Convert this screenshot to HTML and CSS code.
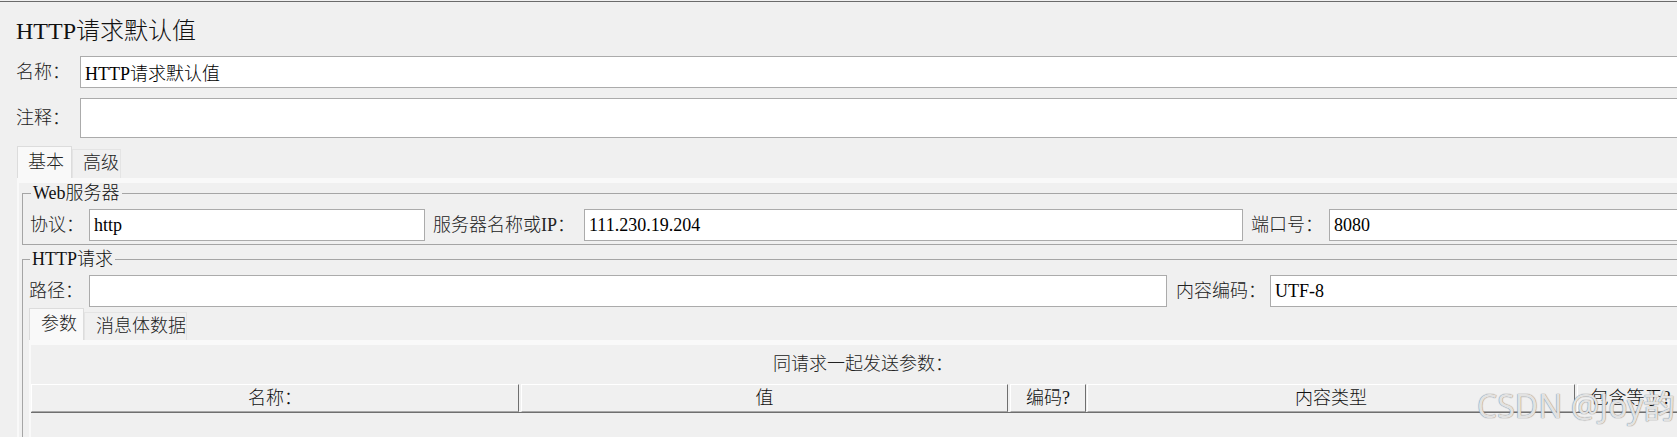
FILE: index.html
```html
<!DOCTYPE html>
<html lang="zh-CN">
<head>
<meta charset="utf-8">
<title>HTTP请求默认值</title>
<link rel="stylesheet" href="styles.css">
</head>
<body>
<div class="page">
  <div class="title">HTTP请求默认值</div>

  <div class="form-row name-row">
    <label class="main-label">名称：</label>
    <input class="text-input grow" type="text" value="HTTP请求默认值">
  </div>
  <div class="form-row comment-row">
    <label class="main-label">注释：</label>
    <input class="text-input grow comment-input" type="text" value="">
  </div>

  <div class="tabs outer-tabs">
    <div class="tab active tab-basic">基本</div>
    <div class="tab tab-adv">高级</div>
  </div>
  <div class="tabpanel outer-panel">
    <fieldset class="group web-group">
      <legend>Web服务器</legend>
      <div class="form-row">
        <label class="lbl lbl-proto">协议：</label>
        <input class="text-input in-proto" type="text" value="http">
        <label class="lbl lbl-server">服务器名称或IP：</label>
        <input class="text-input in-server" type="text" value="111.230.19.204">
        <label class="lbl lbl-port">端口号：</label>
        <input class="text-input grow" type="text" value="8080">
      </div>
    </fieldset>

    <fieldset class="group http-group">
      <legend>HTTP请求</legend>
      <div class="form-row">
        <label class="lbl lbl-path">路径：</label>
        <input class="text-input in-path" type="text" value="">
        <label class="lbl lbl-enc">内容编码：</label>
        <input class="text-input grow" type="text" value="UTF-8">
      </div>
      <div class="tabs inner-tabs">
        <div class="tab active tab-params">参数</div>
        <div class="tab tab-body">消息体数据</div>
      </div>
      <div class="tabpanel inner-panel">
        <div class="caption">同请求一起发送参数：</div>
        <div class="thead">
          <div class="th c1">名称：</div>
          <div class="th c2">值</div>
          <div class="th c3">编码?</div>
          <div class="th c4">内容类型</div>
          <div class="th c5">包含等于?</div>
        </div>
        <div class="tbody"></div>
      </div>
    </fieldset>
  </div>

  <div class="watermark">CSDN @Joy韵</div>
</div>
</body>
</html>
```

FILE: styles.css
```css
html, body {
  margin: 0;
  background: #f0f0f0;
}
body {
  padding-top: 1px;
  overflow: hidden;
  font-family: "Liberation Serif", "Noto Sans CJK SC", serif;
  font-size: 18px;
  font-weight: 300;
  color: #000;
}
.page {
  position: relative;
  box-sizing: border-box;
  width: 1760px;
  height: 436px;
  overflow: hidden;
  border-top: 1px solid #6b6b6b;
  padding-left: 16px;
}
.title {
  margin-top: 15px;
  font-size: 24px;
  line-height: 28px;
  color: #111;
}

.form-row {
  display: flex;
  align-items: center;
}
.name-row { margin-top: 11px; }
.comment-row { margin-top: 10px; }
.main-label {
  flex: none;
  width: 64px;
  line-height: 20px;
  color: #222;
}
.lbl {
  flex: none;
  line-height: 20px;
  color: #222;
}
.text-input {
  box-sizing: border-box;
  flex: none;
  height: 32px;
  margin: 0;
  padding: 0 4px;
  border: 1px solid #ababab;
  background: #fff;
  font: inherit;
  color: #000;
  outline: none;
}
.grow { flex: 1 1 auto; min-width: 0; }
.comment-input { height: 40px; }

/* tabs */
.tabs {
  display: flex;
  align-items: flex-end;
  height: 32px;
}
.outer-tabs { margin: 8px 0 0 1px; }
.inner-tabs { margin-top: 1px; }
.tab {
  box-sizing: border-box;
  height: 29px;
  padding-left: 10px;
  border: 1px solid #e4e4e4;
  border-bottom: none;
  background: #f0f0f0;
  line-height: 27px;
  color: #222;
}
.tab.active {
  height: 32px;
  background: #f9f9f9;
  border-color: #dcdcdc;
  line-height: 31px;
}
.tab-basic { width: 55px; }
.tab-adv { width: 49px; }
.tab-params { width: 55px; padding-left: 11px; }
.tab-body { width: 103px; padding-left: 11px; height: 28px; line-height: 26px; }

.tabpanel {
  border-top: 5px solid #f9f9f9;
  border-left: 2px solid #f9f9f9;
}
.outer-panel { margin-left: 1px; }

/* groups */
.group {
  min-width: 0;
  margin: 0 0 0 3px;
  padding: 6px 8px 3px 7px;
  border: 1px solid #a5a5a5;
}
.group legend {
  margin-left: 1px;
  padding: 0 2px;
  font-size: 18px;
  line-height: 20px;
  color: #111;
}
.http-group {
  margin-top: 4px;
  padding-left: 6px;
}

.lbl-proto { width: 59px; }
.in-proto { width: 336px; }
.lbl-server { margin-left: 8px; width: 151px; }
.in-server { width: 659px; }
.lbl-port { margin-left: 8px; width: 78px; }

.lbl-path { width: 60px; }
.in-path { width: 1078px; }
.lbl-enc { margin-left: 9px; width: 94px; }

/* params panel */
.caption {
  width: 1664px;
  height: 39px;
  line-height: 39px;
  text-align: center;
  color: #222;
}
.thead {
  display: flex;
  border-bottom: 1px solid #6f6f6f;
}
.th {
  box-sizing: border-box;
  flex: none;
  height: 28px;
  margin-right: 2px;
  border-top: 1px solid #fff;
  border-left: 1px solid #fff;
  border-right: 1px solid #6f6f6f;
  border-bottom: 1px solid #a8a8a8;
  text-align: center;
  line-height: 26px;
  color: #111;
}
.c1 { width: 488px; }
.c2 { width: 487px; }
.c3 { width: 76px; margin-right: 1px; }
.c4 { width: 488px; }
.c5 { width: 107px; }
.tbody { height: 24px; }

.watermark {
  position: absolute;
  left: 1477px;
  top: 388px;
  font-family: "Noto Sans", "Noto Sans CJK SC", sans-serif;
  font-size: 32px;
  font-weight: 400;
  line-height: 32px;
  white-space: nowrap;
  color: rgba(255, 255, 255, 0.8);
  text-shadow: 0 0 1px #7a7a7a, 0 0 1px #9a9a9a;
}
```
